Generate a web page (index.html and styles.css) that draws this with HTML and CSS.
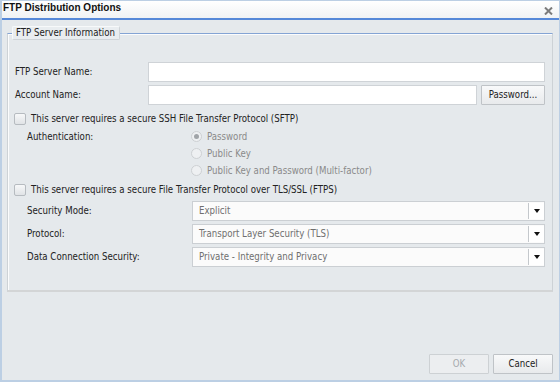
FILE: index.html
```html
<!DOCTYPE html>
<html lang="en">
<head>
	<meta charset="UTF-8">
	<title>FTP Distribution Options</title>
	<link rel="stylesheet" href="styles.css">
</head>
<body>
<div class="dialog">
	<div class="titlebar">
		<span class="title">FTP Distribution Options</span>
		<svg class="close" width="9" height="8" viewBox="0 0 9 8"><path d="M1 0.5 L8 7.5 M8 0.5 L1 7.5" stroke="#7b7b7b" stroke-width="2"/></svg>
	</div>
	<fieldset class="group">
		<legend>FTP Server Information</legend>
		<div class="row">
			<label class="lbl">FTP Server Name:</label>
			<input class="field" type="text">
		</div>
		<div class="row">
			<label class="lbl">Account Name:</label>
			<input class="field" type="text">
			<button class="btn pw">Password...</button>
		</div>
		<label class="check"><span class="box"></span>This server requires a secure SSH File Transfer Protocol (SFTP)</label>
		<div class="sub auth">
			<span class="sublbl">Authentication:</span>
			<div class="radios">
				<label class="radio"><span class="dot on"></span>Password</label>
				<label class="radio"><span class="dot"></span>Public Key</label>
				<label class="radio"><span class="dot"></span>Public Key and Password (Multi-factor)</label>
			</div>
		</div>
		<label class="check second"><span class="box"></span>This server requires a secure File Transfer Protocol over TLS/SSL (FTPS)</label>
		<div class="sub sel">
			<span class="sublbl">Security Mode:</span>
			<div class="select"><span class="val">Explicit</span><span class="arrow"></span></div>
		</div>
		<div class="sub sel">
			<span class="sublbl">Protocol:</span>
			<div class="select"><span class="val">Transport Layer Security (TLS)</span><span class="arrow"></span></div>
		</div>
		<div class="sub sel">
			<span class="sublbl">Data Connection Security:</span>
			<div class="select"><span class="val">Private - Integrity and Privacy</span><span class="arrow"></span></div>
		</div>
	</fieldset>
	<div class="buttons">
		<button class="btn wide" disabled>OK</button>
		<button class="btn wide">Cancel</button>
	</div>
</div>
</body>
</html>
```

FILE: styles.css
```css
* {
	box-sizing: border-box;
}
body {
	margin:0;
	background:#e5e9ec;
	font-family:"DejaVu Sans Condensed", "DejaVu Sans", sans-serif;
	font-stretch:condensed;
	font-size:9.6px;
	line-height:12px;
	color:#222;
}

.dialog {
	width:560px;
	height:382px;
	display:flex;
	flex-direction:column;
	border:1px solid #bccfe4;
	border-left-width:2px;
	border-bottom-width:2px;
}

.titlebar {
	height:19px;
	flex:none;
	display:flex;
	justify-content:space-between;
	padding:1px 6px 0 1px;
	background:linear-gradient(#ffffff, #f0f2f4);
	border-bottom:2px solid #5688d8;
}
.title {
	font-family:"Liberation Sans", Arial, sans-serif;
	font-stretch:normal;
	font-weight:bold;
	font-size:10px;
	color:#111;
}
.close {
	margin-top:5px;
}

.group {
	margin:6px 6px 0 5px;
	padding:22px 7px 23px;
	min-width:0;
	border:1px solid #cdd2d6;
	border-top-color:#84a4d4;
	border-bottom:2px solid #d3d5d6;
	box-shadow:inset 1px 1px 0 #fbfcfd;
}
.group legend {
	margin-left:-3px;
	padding:0 4px 0 3px;
	height:14px;
	line-height:12px;
	border:1px solid #cfd4d8;
	border-color:#f7f9fa #cfd4d8 #cfd4d8 #f7f9fa;
	border-radius:2px;
	background:#e9edf0;
	color:#222;
}

.row {
	display:flex;
	align-items:center;
	height:20px;
}
.row + .row {
	margin-top:3px;
}
.lbl {
	width:133px;
	flex:none;
}
.field {
	flex:1;
	min-width:0;
	height:20px;
	margin:0;
	padding:0 4px;
	border:1px solid #cfd3d7;
	background:#fff;
	font:inherit;
}

.btn {
	height:20px;
	padding:0;
	border:1px solid #bfc3c7;
	border-radius:1px;
	background:linear-gradient(#f8f9fa, #e8eaec);
	font:inherit;
	color:#222;
}
.btn:disabled {
	color:#a6aaae;
	border-color:#cdd1d4;
	background:#eceef0;
}
.pw {
	width:64px;
	margin-left:4px;
}

.check {
	display:flex;
	align-items:center;
	height:14px;
	margin-top:7px;
	margin-left:-1px;
}
.check.second {
	margin-top:4px;
}
.box {
	width:12px;
	height:12px;
	margin-right:5px;
	border:1px solid #b6bbc0;
	border-radius:2px;
	background:linear-gradient(#f7f8f9, #e0e3e6);
}

.sub {
	display:flex;
	margin-left:12px;
}
.sublbl {
	width:165px;
	flex:none;
}
.auth {
	margin-top:2px;
}
.auth .sublbl {
	line-height:17px;
}
.radios {
	display:flex;
	flex-direction:column;
	margin-left:-1px;
}
.radio {
	display:flex;
	align-items:center;
	height:17px;
	color:#8a8a8a;
}
.dot {
	width:11px;
	height:11px;
	margin-right:5px;
	display:flex;
	align-items:center;
	justify-content:center;
	border:1px solid #cdd0d3;
	border-radius:50%;
	background:#eef0f2;
}
.dot.on::after {
	content:"";
	width:5px;
	height:5px;
	border-radius:50%;
	background:#a0a4a8;
}

.sel {
	height:20px;
	align-items:center;
	margin-top:3px;
}
.check + .sel {
	margin-top:4px;
}
.select {
	flex:1;
	height:20px;
	display:flex;
	border:1px solid #cbcfd3;
	background:#fbfbfb;
	color:#6f6f6f;
}
.select .val {
	flex:1;
	padding-left:6px;
	line-height:17px;
}
.arrow {
	width:16px;
	margin:1px 0 1px 0;
	display:flex;
	align-items:center;
	justify-content:center;
	border-left:1px solid #c4c8cc;
	background:#fff;
}
.arrow::after {
	content:"";
	border-top:4px solid #111;
	border-left:3.5px solid transparent;
	border-right:3.5px solid transparent;
}

.buttons {
	margin-top:auto;
	display:flex;
	justify-content:flex-end;
	gap:4px;
	padding:0 6px 6px 0;
}
.wide {
	width:60px;
}
```
